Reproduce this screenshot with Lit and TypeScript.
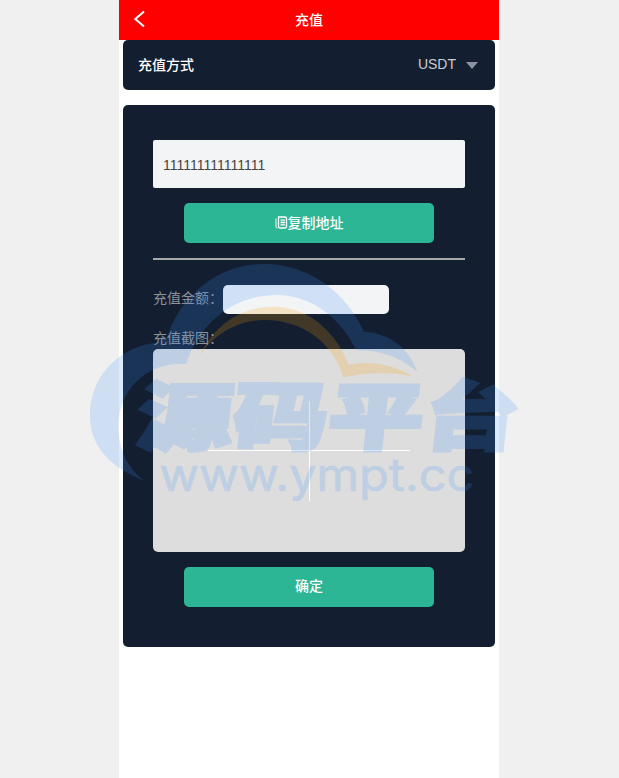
import { LitElement, html, css } from "lit";
import { customElement } from "lit/decorators.js";

@customElement("app-root")
export class AppRoot extends LitElement {
  static styles = css`
    :host {
      display: block;
      position: relative;
      min-height: 778px;
      background: #f0f0f0;
      overflow: hidden;
      font-family: "Liberation Sans", "Noto Sans CJK SC", sans-serif;
      font-size: 14px;
    }
    .page {
      width: 380px;
      min-height: 778px;
      margin-left: 119px;
      background: #fff;
      display: flex;
      flex-direction: column;
    }
    .bar {
      height: 40px;
      box-sizing: border-box;
      padding-bottom: 2px;
      background: #f00;
      color: #fff;
      display: flex;
      align-items: center;
      justify-content: center;
      position: relative;
      font-size: 14px;
      font-weight: 500;
      font-family: "Noto Sans CJK SC", sans-serif;
    }
    .back {
      position: absolute;
      left: 14px;
      top: 10px;
      width: 13px;
      height: 18px;
    }
    .panel {
      margin: 0 4px;
      background: #131f31;
      border-radius: 5px;
    }
    .method {
      height: 50px;
      box-sizing: border-box;
      padding: 0 17px 0 15px;
      display: flex;
      align-items: center;
      justify-content: space-between;
      color: #fff;
      font-size: 14px;
      font-weight: 500;
    }
    .method-label {
      font-family: "Noto Sans CJK SC", sans-serif;
      padding-bottom: 2px;
    }
    .method-value {
      display: flex;
      align-items: center;
      gap: 10px;
      color: #c8ccd4;
      font-size: 14px;
      font-weight: 400;
      padding-bottom: 2px;
    }
    .caret {
      width: 0;
      height: 0;
      border-left: 6.5px solid transparent;
      border-right: 6.5px solid transparent;
      border-top: 7px solid #8d93a3;
      margin-top: 2px;
    }
    .form {
      margin-top: 15px;
      height: 542px;
      box-sizing: border-box;
      padding: 35px 30px 0;
      display: flex;
      flex-direction: column;
    }
    .address {
      height: 48px;
      box-sizing: border-box;
      padding: 1px 10px 0;
      display: flex;
      align-items: center;
      background: #f3f4f6;
      border-radius: 2px;
      color: #444;
      font-size: 14px;
    }
    .action {
      width: 250px;
      height: 40px;
      box-sizing: border-box;
      padding-bottom: 2px;
      align-self: center;
      background: #2db695;
      border-radius: 5px;
      color: #fff;
      display: flex;
      align-items: center;
      justify-content: center;
      font-size: 14px;
      font-weight: 500;
      font-family: "Noto Sans CJK SC", sans-serif;
    }
    .copy {
      margin-top: 15px;
    }
    .copy svg {
      width: 13px;
      height: 13px;
    }
    .rule {
      height: 2px;
      margin-top: 15px;
      background: #a9a9a9;
    }
    .amount {
      margin-top: 25px;
      height: 29px;
      display: flex;
      align-items: center;
      color: #8e929a;
      font-size: 14px;
      font-family: "Noto Sans CJK SC", sans-serif;
    }
    .amount span {
      width: 70px;
      padding-bottom: 6px;
    }
    .amount-input {
      width: 166px;
      height: 29px;
      background: #f3f4f6;
      border-radius: 5px;
    }
    .shot-label {
      margin-top: 15px;
      height: 20px;
      line-height: 16px;
      color: #8e929a;
      font-size: 14px;
      font-family: "Noto Sans CJK SC", sans-serif;
    }
    .upload {
      height: 203px;
      background: #ddd;
      border-radius: 5px;
      position: relative;
    }
    .upload::before {
      content: "";
      position: absolute;
      left: 55px;
      top: 101px;
      width: 202px;
      height: 1px;
      background: #fff;
    }
    .upload::after {
      content: "";
      position: absolute;
      left: 156px;
      top: 52px;
      width: 1px;
      height: 100px;
      background: #fff;
    }
    .confirm {
      margin-top: 15px;
      padding-bottom: 4px;
    }
    .mark {
      position: absolute;
      left: 80px;
      top: 260px;
      width: 450px;
      height: 260px;
      pointer-events: none;
    }
    .mark-cn {
      font-family: "Noto Sans CJK SC", sans-serif;
      font-weight: 900;
      font-size: 222px;
      fill: rgb(60, 145, 255);
      stroke: rgb(60, 145, 255);
      stroke-width: 10px;
      opacity: 0.19;
    }
    .mark-en {
      font-family: "Inter", "Liberation Sans", sans-serif;
      font-size: 137px;
      fill: rgb(60, 145, 255);
      stroke: rgb(60, 145, 255);
      stroke-width: 2px;
      opacity: 0.19;
    }
  `;

  render() {
    return html`
      <div class="page">
        <header class="bar">
          <svg class="back" viewBox="0 0 13 18" fill="none" stroke="#fff" stroke-width="2">
            <path d="M11 1.5 2.3 9 11 16.5" />
          </svg>
          充值
        </header>
        <section class="panel method">
          <span class="method-label">充值方式</span>
          <span class="method-value">USDT<i class="caret"></i></span>
        </section>
        <section class="panel form">
          <div class="address">111111111111111</div>
          <div class="action copy">
            <svg viewBox="0 0 13 13" fill="none" stroke="#fff" stroke-width="1.3">
              <path d="M1 2.5V10.5A1.5 1.5 0 0 0 2.5 12" opacity="0.7" />
              <path d="M3.5 1h6.5a1.5 1.5 0 0 1 1.5 1.5v8a1.5 1.5 0 0 1-1.5 1.5h-5A1.5 1.5 0 0 1 3.5 10.5V1z" />
              <path d="M5.5 4.2h4.5M5.5 6.5h4.5M5.5 8.8h4.5" />
            </svg>
            复制地址
          </div>
          <div class="rule"></div>
          <div class="amount">
            <span>充值金额：</span>
            <div class="amount-input"></div>
          </div>
          <div class="shot-label">充值截图：</div>
          <div class="upload"></div>
          <div class="action confirm">确定</div>
        </section>
      </div>
      <svg class="mark" viewBox="0 0 1350 780">
        <path
          fill="rgba(60,145,255,0.19)"
          d="M192 662 C90 620 28 560 30 460 C32 340 130 255 232 248 L262 228 C310 90 430 12 552 12 C690 12 800 100 852 215 C930 218 990 270 1012 336 C960 290 900 270 828 270 C780 170 690 105 590 105 C450 105 355 200 318 312 C200 305 115 390 115 500 C115 570 145 625 192 662 Z"
        />
        <path
          fill="rgba(255,160,5,0.2)"
          d="M358 288 C405 190 490 140 580 140 C690 140 770 220 806 314 C880 300 950 318 1000 350 C930 335 860 338 790 352 C760 250 670 180 555 180 C470 180 400 225 358 288 Z"
        />
        <text class="mark-cn" textLength="1145" lengthAdjust="spacingAndGlyphs" transform="translate(165 553) skewX(-6)">源码平台</text>
        <text class="mark-en" x="238" y="693" textLength="945" lengthAdjust="spacingAndGlyphs">www.ympt.cc</text>
      </svg>
    `;
  }
}
